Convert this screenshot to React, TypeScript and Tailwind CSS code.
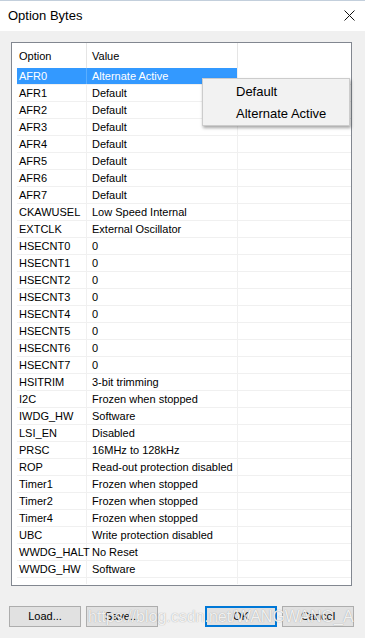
const rows: [string, string][] = [
  ["AFR0", "Alternate Active"],
  ["AFR1", "Default"],
  ["AFR2", "Default"],
  ["AFR3", "Default"],
  ["AFR4", "Default"],
  ["AFR5", "Default"],
  ["AFR6", "Default"],
  ["AFR7", "Default"],
  ["CKAWUSEL", "Low Speed Internal"],
  ["EXTCLK", "External Oscillator"],
  ["HSECNT0", "0"],
  ["HSECNT1", "0"],
  ["HSECNT2", "0"],
  ["HSECNT3", "0"],
  ["HSECNT4", "0"],
  ["HSECNT5", "0"],
  ["HSECNT6", "0"],
  ["HSECNT7", "0"],
  ["HSITRIM", "3-bit trimming"],
  ["I2C", "Frozen when stopped"],
  ["IWDG_HW", "Software"],
  ["LSI_EN", "Disabled"],
  ["PRSC", "16MHz to 128kHz"],
  ["ROP", "Read-out protection disabled"],
  ["Timer1", "Frozen when stopped"],
  ["Timer2", "Frozen when stopped"],
  ["Timer4", "Frozen when stopped"],
  ["UBC", "Write protection disabled"],
  ["WWDG_HALT", "No Reset"],
  ["WWDG_HW", "Software"],
];

function Button({ label, focused }: { label: string; focused?: boolean }) {
  return (
    <div
      className={
        focused
          ? "w-[72px] h-[21px] flex items-center justify-center bg-[#e1e1e1] border-2 border-[#0078d7] text-[11px] text-black"
          : "w-[72px] h-[21px] flex items-center justify-center bg-[#e1e1e1] border border-[#adadad] text-[11px] text-black"
      }
    >
      {label}
    </div>
  );
}

export default function App() {
  return (
    <div className="relative w-[365px] h-[638px] flex flex-col bg-[#f0f0f0] overflow-hidden font-['Liberation_Sans',Arial,sans-serif]">
      {/* title bar */}
      <div className="h-[31px] shrink-0 flex items-center justify-between bg-white border-t border-[#c3cfdc] pl-[8px] pr-[10px]">
        <span className="text-[13px] text-black">Option Bytes</span>
        <svg width="11" height="11" viewBox="0 0 11 11" className="mb-[1px]">
          <path d="M0.5 0.5 L10.5 10.5 M10.5 0.5 L0.5 10.5" stroke="#111" strokeWidth="1" />
        </svg>
      </div>

      {/* list */}
      <div className="mt-[11px] ml-[11px] w-[341px] h-[544px] border border-[#828790] bg-white pl-[5px] overflow-hidden">
        <div className="flex h-[25px] text-[11px] text-black">
          <div className="w-[70px] border-r border-[#e5e5e5] pl-[2px] pt-[1px] flex items-center">Option</div>
          <div className="w-[151px] border-r border-[#e5e5e5] pl-[5px] pt-[1px] flex items-center">Value</div>
          <div className="flex-1" />
        </div>
        {rows.map(([opt, val], i) => (
          <div key={opt + i} className="flex h-[17px] border-b border-[#f0f0f0] text-[11px] leading-[17px]">
            <div
              className={
                i === 0
                  ? "w-[70px] bg-[#3399ff] text-white pl-[2px] border-r border-[#5aaeff]"
                  : "w-[70px] text-black pl-[2px] border-r border-[#f0f0f0]"
              }
            >
              {opt}
            </div>
            <div
              className={
                i === 0
                  ? "w-[151px] bg-[#3399ff] text-white pl-[5px] border-r border-[#f0f0f0]"
                  : "w-[151px] text-black pl-[5px] border-r border-[#f0f0f0]"
              }
            >
              {val}
            </div>
            <div className="flex-1" />
          </div>
        ))}
        <div className="flex h-[6px]">
          <div className="w-[70px] border-r border-[#f0f0f0]" />
          <div className="w-[151px] border-r border-[#f0f0f0]" />
        </div>
      </div>

      {/* buttons */}
      <div className="mt-[20px] flex justify-between pl-[9px] pr-[11px]">
        <div className="flex gap-[5px]">
          <Button label="Load..." />
          <Button label="Save..." />
        </div>
        <div className="flex gap-[5px]">
          <Button label="OK" focused />
          <Button label="Cancel" />
        </div>
      </div>

      {/* context menu */}
      <div className="absolute left-[202px] top-[78px] w-[148px] bg-[#f2f2f2] border border-[#cccccc] py-[1px] shadow-[1px_2px_3px_rgba(0,0,0,0.35)] text-[13px] text-black">
        <div className="h-[22px] flex items-center pl-[33px] pt-[1px]">Default</div>
        <div className="h-[22px] flex items-center pl-[33px] pt-[1px]">Alternate Active</div>
      </div>

      {/* watermark */}
      <div className="absolute left-[88px] top-[606px] text-[16px] leading-[22px] text-white/85 [text-shadow:0_0_1px_rgba(90,90,90,0.6)] pointer-events-none">
        https://blog.csdn.net/WANGWANG_A
      </div>
    </div>
  );
}
